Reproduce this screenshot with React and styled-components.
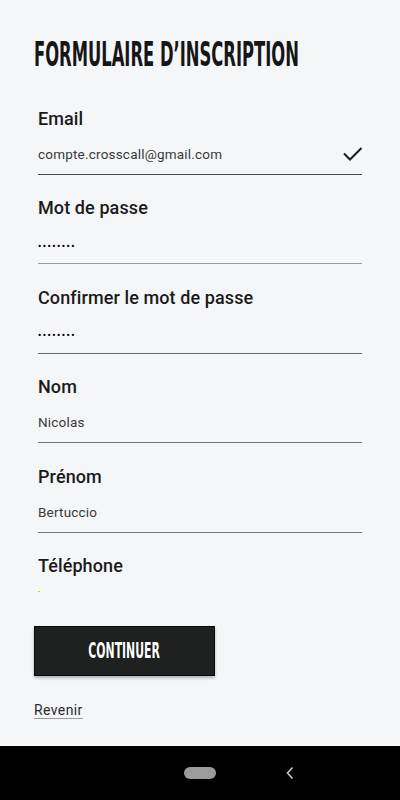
import React from 'react'
import styled, { createGlobalStyle } from 'styled-components'

const GlobalStyle = createGlobalStyle`
  html, body {
    margin: 0;
    padding: 0;
    background: #f5f6f8;
  }
  body {
    font-family: Roboto, "Liberation Sans", sans-serif;
  }
`

const Screen = styled.div`
  width: 400px;
  height: 800px;
  display: flex;
  flex-direction: column;
  background: #f5f6f8;
  overflow: hidden;
`

const Content = styled.div`
  flex: 1;
  padding: 36px 38px 0 34px;
`

const Titulo = styled.h1`
  margin: 0;
  font-family: "Liberation Sans Narrow", "DejaVu Sans Condensed", "Liberation Sans", sans-serif;
  font-weight: 700;
  font-size: 34px;
  line-height: 36px;
  color: #161616;
  white-space: nowrap;
  transform: scaleX(0.535);
  transform-origin: left center;
`

const Form = styled.div`
  padding-left: 4px;
  margin-top: 13px;
`

const Field = styled.div`
  padding-top: 21.5px;
  padding-bottom: 10px;
  border-bottom: ${p => (p.$line ? `1px solid ${p.$line}` : 'none')};
`

const Label = styled.div`
  font-size: 18px;
  line-height: 24px;
  font-weight: 500;
  color: #1a1a1a;
  letter-spacing: 0.1px;
  margin-bottom: 13px;
`

const ValueRow = styled.div`
  display: flex;
  align-items: center;
  justify-content: space-between;
  height: 20px;
`

const Value = styled.span`
  font-size: 13.5px;
  line-height: 20px;
  color: #3a3a3a;
  letter-spacing: 0.2px;
`

const Dots = styled.span`
  display: inline-block;
  margin-top: 5px;
  font-size: 9px;
  font-weight: 700;
  line-height: 20px;
  color: #000;
  letter-spacing: 1.5px;
`

const Cursor = styled.span`
  display: block;
  align-self: flex-start;
  width: 2px;
  height: 1px;
  background: #c6e600;
`

const Actions = styled.div`
  margin-top: 4.5px;
  display: flex;
  flex-direction: column;
  align-items: flex-start;
`

const Bouton = styled.button`
  width: 181px;
  height: 50px;
  background: #1f2020;
  border: 1px solid #0a0a0a;
  box-shadow: 0 2px 3px rgba(0, 0, 0, 0.28);
  display: flex;
  align-items: center;
  justify-content: center;
  padding: 0;
  cursor: pointer;

  span {
    font-family: "Liberation Sans Narrow", "DejaVu Sans Condensed", "Liberation Sans", sans-serif;
    font-weight: 700;
    font-size: 22px;
    color: #fff;
    white-space: nowrap;
    transform: scaleX(0.55);
    text-shadow: 0 0 1px #000;
  }
`

const Revenir = styled.a`
  margin-top: 25px;
  font-size: 14px;
  line-height: 18px;
  color: #2b2b2b;
  letter-spacing: 0.4px;
  text-decoration: underline;
  text-decoration-color: #9a9a9a;
  text-underline-offset: 3px;
`

const NavBar = styled.div`
  height: 54px;
  background: #000;
  display: flex;
  align-items: center;
  justify-content: center;
  position: relative;
`

const Pill = styled.div`
  width: 32px;
  height: 12px;
  border-radius: 6px;
  background: #9b9b9b;
`

const Back = styled.svg`
  position: absolute;
  left: 285px;
  top: 20px;
`

const Check = () => (
  <svg width="24" height="20" viewBox="0 0 24 20" style={{ marginRight: -3 }}>
    <path d="M3 9.5 L9 15.5 L20.5 4" fill="none" stroke="#1c1c1c" strokeWidth="2" />
  </svg>
)

const champs = [
  { label: 'Email', value: 'compte.crosscall@gmail.com', line: '#4a4a4a', check: true },
  { label: 'Mot de passe', password: true, line: '#9c9c9c' },
  { label: 'Confirmer le mot de passe', password: true, line: '#666' },
  { label: 'Nom', value: 'Nicolas', line: '#777' },
  { label: 'Prénom', value: 'Bertuccio', line: '#777' },
]

const App = () => {
  return (
    <>
      <GlobalStyle />
      <Screen>
        <Content>
          <Titulo>FORMULAIRE D’INSCRIPTION</Titulo>
          <Form>
            {champs.map(c => (
              <Field key={c.label} $line={c.line}>
                <Label>{c.label}</Label>
                <ValueRow>
                  {c.password ? <Dots>••••••••</Dots> : <Value>{c.value}</Value>}
                  {c.check && <Check />}
                </ValueRow>
              </Field>
            ))}
            <Field>
              <Label>Téléphone</Label>
              <ValueRow>
                <Cursor />
              </ValueRow>
            </Field>
          </Form>
          <Actions>
            <Bouton><span>CONTINUER</span></Bouton>
            <Revenir>Revenir</Revenir>
          </Actions>
        </Content>
        <NavBar>
          <Pill />
          <Back width="10" height="14" viewBox="0 0 10 14">
            <path d="M7.5 1.5 L2.5 7 L7.5 12.5" fill="none" stroke="#c8c8c8" strokeWidth="1.6" />
          </Back>
        </NavBar>
      </Screen>
    </>
  )
}

export default App
